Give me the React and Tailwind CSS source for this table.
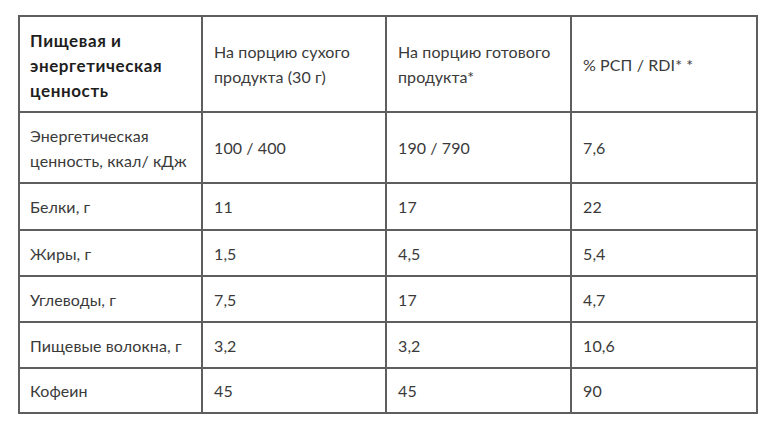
import React from "react";

const rows = [
  ["Энергетическая\nценность, ккал/ кДж", "100 / 400", "190 / 790", "7,6", "h-[71px]"],
  ["Белки, г", "11", "17", "22", "h-[47px]"],
  ["Жиры, г", "1,5", "4,5", "5,4", "h-[46px]"],
  ["Углеводы, г", "7,5", "17", "4,7", "h-[46px]"],
  ["Пищевые волокна, г", "3,2", "3,2", "10,6", "h-[46px]"],
  ["Кофеин", "45", "45", "90", "h-[45px]"],
];

export default function App() {
  return (
    <div
      className="w-[768px] h-[428px] bg-white pt-[15px] pl-[18px]"
      style={{ fontFamily: "Lato, 'Noto Sans', sans-serif" }}
    >
      <table className="border-collapse table-fixed w-[738px] text-[16px] tracking-[0.1px] leading-[25px] text-[#3a3a3a]">
        <colgroup>
          <col className="w-[183px]" />
          <col className="w-[184px]" />
          <col className="w-[185px]" />
          <col className="w-[186px]" />
        </colgroup>
        <tbody>
          <tr className="h-[96px]">
            <td className="border-2 border-[#5e5e5e] pl-[10px] pr-1 pt-[2px] align-middle font-bold text-[17px] tracking-[0.6px] text-[#1e1e1e]">
              Пищевая и<br />энергетическая<br />ценность
            </td>
            <td className="border-2 border-[#5e5e5e] pl-[11px] pr-1 align-middle">
              На порцию сухого<br />продукта (30 г)
            </td>
            <td className="border-2 border-[#5e5e5e] pl-[11px] pr-1 align-middle">
              На порцию готового<br />продукта*
            </td>
            <td className="border-2 border-[#5e5e5e] pl-[11px] pr-1 align-middle">
              % РСП / RDI* *
            </td>
          </tr>
          {rows.map((r, i) => (
            <tr key={i} className={r[4]}>
              {r.slice(0, 4).map((c, j) => (
                <td
                  key={j}
                  className={
                    j === 0
                      ? "border-2 border-[#5e5e5e] pl-[10px] pr-1 align-middle whitespace-pre-line"
                      : "border-2 border-[#5e5e5e] pl-[11px] pr-1 align-middle"
                  }
                >
                  {c}
                </td>
              ))}
            </tr>
          ))}
        </tbody>
      </table>
    </div>
  );
}
